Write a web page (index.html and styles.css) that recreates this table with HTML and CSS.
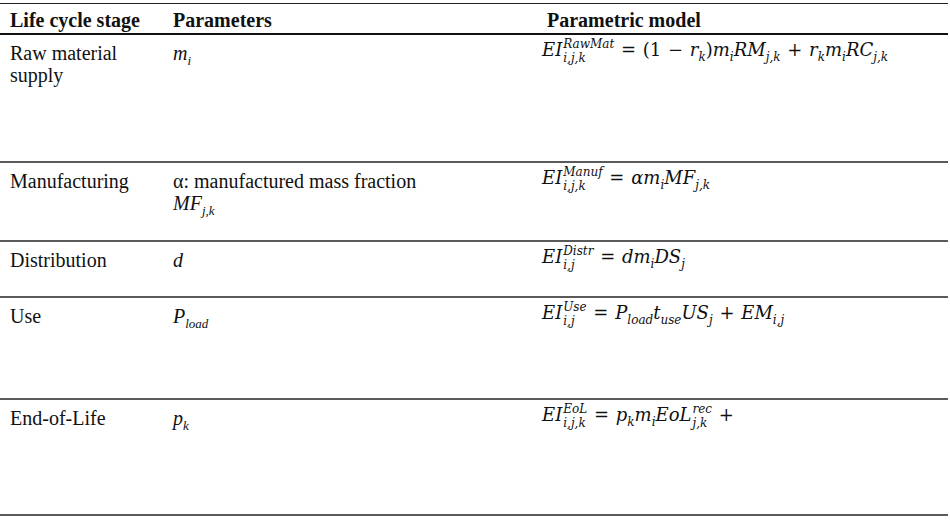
FILE: index.html
```html
<!DOCTYPE html>
<html>
<head>
<meta charset="utf-8">
<link rel="stylesheet" href="styles.css">
</head>
<body>
<div class="table">
  <div class="row head">
    <div class="cell c1">Life cycle stage</div>
    <div class="cell c2">Parameters</div>
    <div class="cell c3">Parametric model</div>
  </div>
  <div class="row r1">
    <div class="cell c1">Raw material<br>supply</div>
    <div class="cell c2"><i>m</i><sub class="s"><i>i</i></sub></div>
    <div class="cell c3 eq"><i>EI</i><span class="ss"><span class="sp">RawMat</span><span class="sb">i,j,k</span></span> <span class="op">=</span> <span class="up">(1</span> <span class="op">−</span> <i>r</i><sub class="s">k</sub><span class="up">)</span><i>m</i><sub class="s">i</sub><i>RM</i><sub class="s">j,k</sub> <span class="op">+</span> <i>r</i><sub class="s">k</sub><i>m</i><sub class="s">i</sub><i>RC</i><sub class="s">j,k</sub></div>
  </div>
  <div class="row r2">
    <div class="cell c1">Manufacturing</div>
    <div class="cell c2">α: manufactured mass fraction<br><i>MF</i><sub class="s"><i>j,k</i></sub></div>
    <div class="cell c3 eq"><i>EI</i><span class="ss"><span class="sp">Manuf</span><span class="sb">i,j,k</span></span> <span class="op">=</span> <i>αm</i><sub class="s">i</sub><i>MF</i><sub class="s">j,k</sub></div>
  </div>
  <div class="row r3">
    <div class="cell c1">Distribution</div>
    <div class="cell c2"><i>d</i></div>
    <div class="cell c3 eq"><i>EI</i><span class="ss"><span class="sp">Distr</span><span class="sb">i,j</span></span> <span class="op">=</span> <i>dm</i><sub class="s">i</sub><i>DS</i><sub class="s">j</sub></div>
  </div>
  <div class="row r4">
    <div class="cell c1">Use</div>
    <div class="cell c2"><i>P</i><sub class="s"><i>load</i></sub></div>
    <div class="cell c3 eq"><i>EI</i><span class="ss"><span class="sp">Use</span><span class="sb">i,j</span></span> <span class="op">=</span> <i>P</i><sub class="s">load</sub><i>t</i><sub class="s">use</sub><i>US</i><sub class="s">j</sub> <span class="op">+</span> <i>EM</i><sub class="s">i,j</sub></div>
  </div>
  <div class="row r5">
    <div class="cell c1">End-of-Life</div>
    <div class="cell c2"><i>p</i><sub class="s"><i>k</i></sub></div>
    <div class="cell c3 eq"><i>EI</i><span class="ss"><span class="sp">EoL</span><span class="sb">i,j,k</span></span> <span class="op">=</span> <i>p</i><sub class="s">k</sub><i>m</i><sub class="s">i</sub><i>EoL</i><span class="ss"><span class="sp">rec</span><span class="sb">j,k</span></span> <span class="op">+</span></div>
  </div>
</div>
</body>
</html>
```

FILE: styles.css
```css
html, body {
  margin: 0;
  padding: 0;
  background: #ffffff;
}
body {
  font-family: "Liberation Serif", "Times New Roman", serif;
  font-size: 20px;
  color: #111;
  padding-top: 3px;
}
.table {
  width: 948px;
  border-top: 1px solid #222;
}
.row {
  display: grid;
  grid-template-columns: 173px 369px 406px;
  box-sizing: border-box;
  border-bottom: 2px solid #5a5a5a;
  padding-top: 7px;
}
.head {
  height: 31px;
  padding-top: 5px;
  border-bottom: 2px solid #111;
  font-weight: bold;
}
.head .c3 { padding-left: 5px; }
.r1 { height: 128px; }
.r2 { height: 79px; }
.r3 { height: 56px; }
.r4 { height: 102px; }
.r5 { height: 116px; }
.cell {
  line-height: 22px;
  white-space: nowrap;
}
.c1 { padding-left: 10px; }
.eq {
  font-family: "DejaVu Serif", "Liberation Serif", serif;
  font-style: italic;
  font-size: 18px;
  margin-top: -5px;
}
.eq i { font-style: italic; }
.up { font-style: normal; }
.op {
  font-style: normal;
  padding: 0 1px;
}
.s {
  font-size: 13px;
  vertical-align: -5px;
  line-height: 0;
}
.eq .s {
  font-size: 12px;
  font-style: italic;
}
.ss {
  display: inline-block;
  vertical-align: -6px;
  font-size: 12px;
  margin-left: 1px;
}
.sp, .sb {
  display: block;
  line-height: 14px;
}
```
